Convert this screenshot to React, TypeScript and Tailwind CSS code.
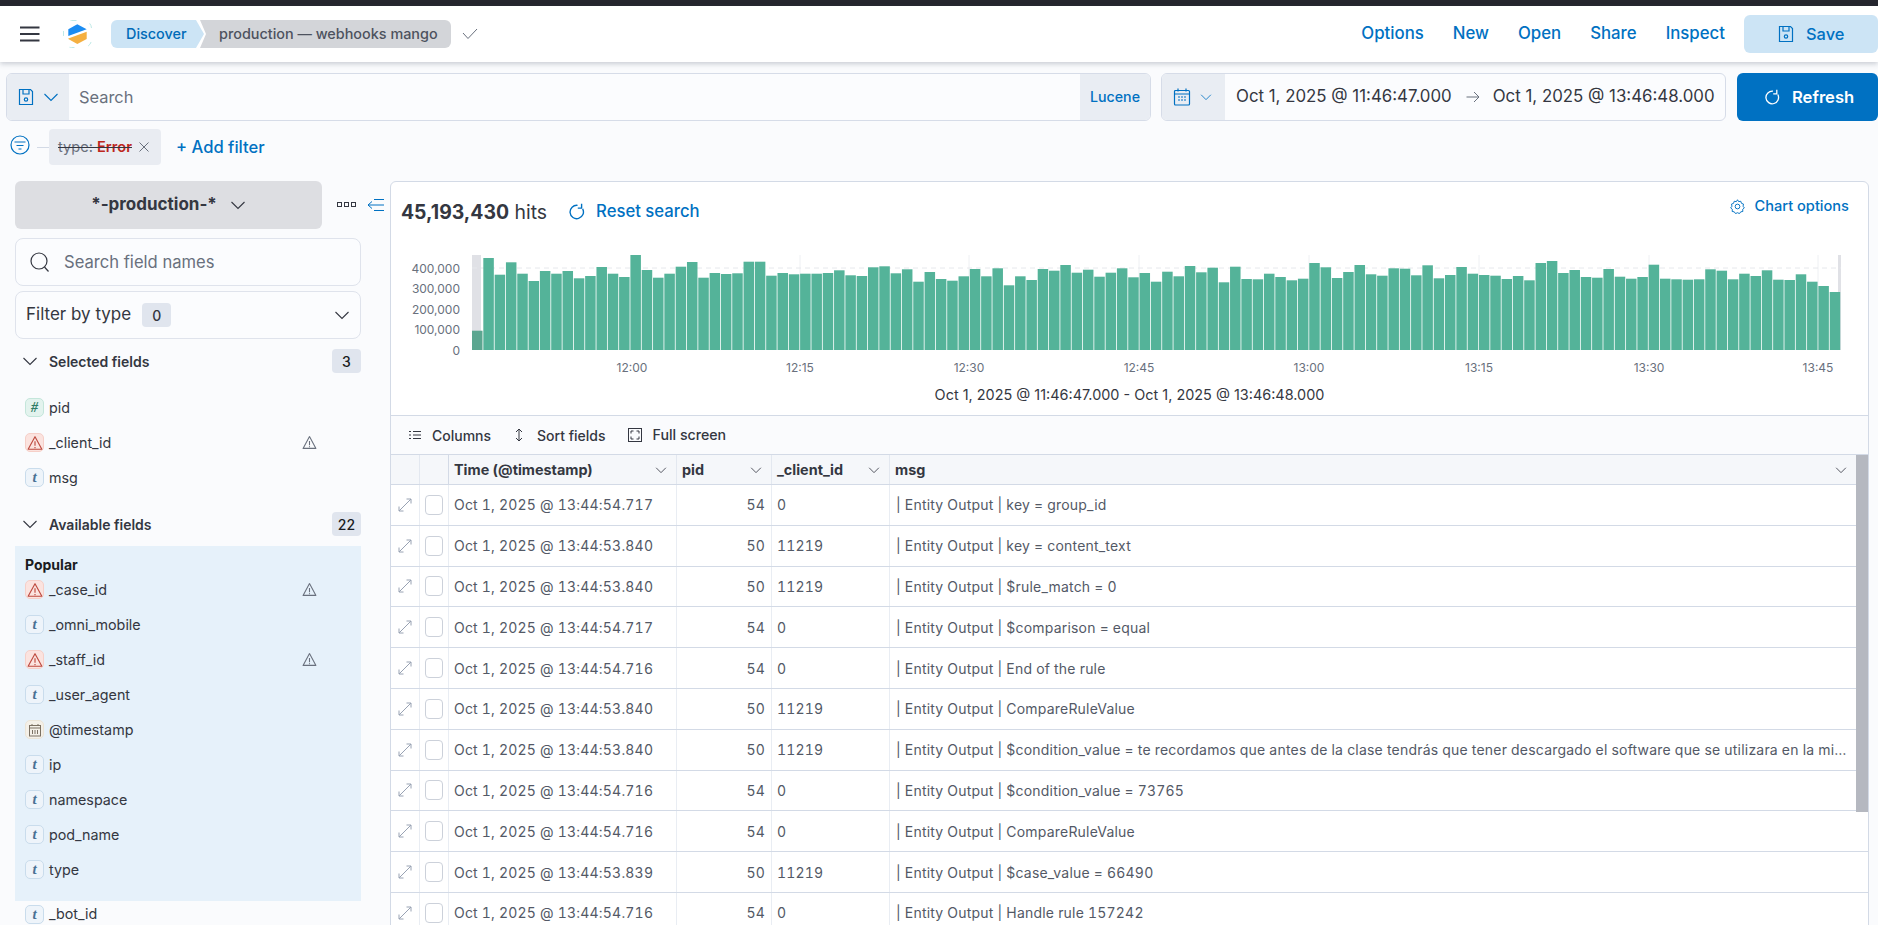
import { ReactNode } from "react";

const BLUE = "#0071c2";

// Bar heights in px, read off the histogram
const bars = [
  19.3, 92, 75.3, 87.7, 76.3, 69, 79, 76.3, 79, 71.7, 74, 83, 76.3, 73, 95, 80, 72.3, 76.3, 83.3, 88, 72.3, 77, 76,
  76.7, 88.3, 88.3, 74.3, 77, 75.7, 76.3, 76.3, 77, 79.7, 74.7, 74, 82.7, 83.7, 76.7, 80.7, 68.3, 78, 71, 69.3, 73.7,
  81, 73.7, 81.7, 64.7, 73.7, 70, 81, 79.3, 85, 77.3, 80.3, 73.3, 77.3, 81.7, 72.7, 77, 68.3, 78.3, 73.7, 84, 77.7,
  82.3, 67.7, 83.3, 71, 70.7, 76.3, 73, 69.7, 71.3, 87, 82.7, 72, 78, 85, 75.7, 74.3, 81.7, 81.3, 74.7, 84.7, 71.7,
  75, 83, 76.3, 75, 74.3, 71, 74, 69.7, 87, 89, 77, 80, 73, 72.3, 81, 73.3, 71.3, 73, 85.3, 71.3, 70.7, 70.3, 70.7,
  80.7, 79.3, 70.7, 76.3, 74, 79.7, 70.3, 70, 75.7, 68.3, 64, 58,
];

const yTicks = [
  { label: "400,000", y: 268 },
  { label: "300,000", y: 288.5 },
  { label: "200,000", y: 309 },
  { label: "100,000", y: 329.5 },
  { label: "0", y: 350 },
];

const xTicks = [
  { label: "12:00", x: 632 },
  { label: "12:15", x: 800 },
  { label: "12:30", x: 969 },
  { label: "12:45", x: 1139 },
  { label: "13:00", x: 1309 },
  { label: "13:15", x: 1479 },
  { label: "13:30", x: 1649 },
  { label: "13:45", x: 1818 },
];

const rows = [
  { time: "13:44:54.717", pid: 54, client: "0", msg: "key = group_id" },
  { time: "13:44:53.840", pid: 50, client: "11219", msg: "key = content_text" },
  { time: "13:44:53.840", pid: 50, client: "11219", msg: "$rule_match = 0" },
  { time: "13:44:54.717", pid: 54, client: "0", msg: "$comparison = equal" },
  { time: "13:44:54.716", pid: 54, client: "0", msg: "End of the rule" },
  { time: "13:44:53.840", pid: 50, client: "11219", msg: "CompareRuleValue" },
  {
    time: "13:44:53.840",
    pid: 50,
    client: "11219",
    msg: "$condition_value = te recordamos que antes de la clase tendrás que tener descargado el software que se utilizara en la misma clase",
  },
  { time: "13:44:54.716", pid: 54, client: "0", msg: "$condition_value = 73765" },
  { time: "13:44:54.716", pid: 54, client: "0", msg: "CompareRuleValue" },
  { time: "13:44:53.839", pid: 50, client: "11219", msg: "$case_value = 66490" },
  { time: "13:44:54.716", pid: 54, client: "0", msg: "Handle rule 157242" },
];

function Chevron({ size = 16, color = "#343741" }: { size?: number; color?: string }) {
  return (
    <svg width={size} height={size} viewBox="0 0 16 16" fill="none" stroke={color} strokeWidth="1.1" className="shrink-0">
      <path d="M1.5 5l6.5 6.5L14.500 5" />
    </svg>
  );
}

function SaveIcon({ size = 18, color = BLUE }: { size?: number; color?: string }) {
  return (
    <svg width={size} height={size} viewBox="0 0 18 18" fill="none" stroke={color} strokeWidth="1.200" className="shrink-0">
      <path d="M2.500 1.500h11l2 2v13h-13z" />
      <path d="M6 1.500v4.500h6v-4.500" />
      <circle cx="9" cy="11.500" r="1.700" />
    </svg>
  );
}

function RefreshIcon({ size = 16, color = BLUE }: { size?: number; color?: string }) {
  return (
    <svg width={size} height={size} viewBox="0 0 16 16" fill="none" stroke={color} strokeWidth="1.300" className="shrink-0">
      <path d="M9 2.200a6.300 6.300 0 1 0 4.800 3.300" />
      <path d="M12.800 0.800v4h-3.600" />
    </svg>
  );
}

function WarningGlyph({ color, size = 15 }: { color: string; size?: number }) {
  return (
    <svg width={size} height={size} viewBox="0 0 14 14" fill="none" stroke={color} strokeWidth="1" className="shrink-0">
      <path d="M7 1.500l6 11H1z" strokeLinejoin="round" />
      <path d="M7 5.500v4M7 10.500v1" />
    </svg>
  );
}

function FieldToken({ type }: { type: "t" | "#" | "warn" | "date" }) {
  if (type === "warn") {
    return (
      <span className="flex h-[19px] w-[19px] shrink-0 items-center justify-center rounded-[5px] border border-[#f6cfc8] bg-[#fbe3df]">
        <WarningGlyph color="#bd4a3f" size={16} />
      </span>
    );
  }
  if (type === "date") {
    return (
      <span className="flex h-[19px] w-[19px] shrink-0 items-center justify-center rounded-[5px] border border-[#ebe4d6] bg-[#f4f0e8]">
        <svg width="14" height="14" viewBox="0 0 14 14" fill="none" stroke="#7b7163" strokeWidth="1">
          <rect x="1.500" y="2.500" width="11" height="10.500" />
          <path d="M1.500 5h11M4 1v2M10 1v2M4.500 7v4M7 7v4M9.500 7v4" />
        </svg>
      </span>
    );
  }
  if (type === "#") {
    return (
      <span className="flex h-[19px] w-[19px] shrink-0 items-center justify-center rounded-[5px] border border-[#c4e6db] bg-[#e3f3ee] font-['Liberation_Serif',serif] text-[14px] font-bold italic leading-none text-[#2f7d66]">
        #
      </span>
    );
  }
  return (
    <span className="flex h-[19px] w-[19px] shrink-0 items-center justify-center rounded-[5px] border border-[#c9dcec] bg-[#eef4fa] font-['Liberation_Serif',serif] text-[15px] font-bold italic leading-none text-[#4a7194]">
      t
    </span>
  );
}

function FieldRow({ type, name, warn, short }: { type: "t" | "#" | "warn" | "date"; name: string; warn?: boolean; short?: boolean }) {
  return (
    <div className={`flex items-center gap-[5px] pl-[10px] ${short ? "h-[26px]" : "h-[35px]"}`}>
      <FieldToken type={type} />
      <span className="flex-1 text-[14.3px] text-[#343741]">{name}</span>
      {warn && (
        <span className="mr-[44px]">
          <WarningGlyph color="#69707d" />
        </span>
      )}
    </div>
  );
}

function SectionHead({ label, count, className }: { label: string; count: number; className: string }) {
  return (
    <div className={`flex h-[24px] items-center pl-[7px] ${className}`}>
      <Chevron />
      <span className="ml-[11px] flex-1 text-[14px] font-semibold text-[#343741]">{label}</span>
      <span className="flex h-[24px] w-[29px] items-center justify-center rounded-[4px] bg-[#e0e5ee] text-[14px] font-medium text-[#1a1c21]">
        {count}
      </span>
    </div>
  );
}

function NavLink({ children }: { children: ReactNode }) {
  return <span className="text-[16.8px] font-medium text-[#0071c2]">{children}</span>;
}

function Histogram() {
  const x0 = 472;
  const pitch = 11.314;
  return (
    <svg width="1477" height="130" viewBox="391 250 1477 130" className="block font-['Inter',sans-serif]">
      <rect x="472" y="255" width="9" height="95" fill="#e0e1e6" />
      <rect x="1838" y="255" width="3" height="95" fill="#e0e1e6" />
      {xTicks.map((t) => (
        <line key={t.x} x1={t.x} x2={t.x} y1="255" y2="350" stroke="#eef0f3" />
      ))}
      {yTicks.slice(0, 1).map((t) => (
        <line key={t.y} x1="472" x2="1841" y1={t.y} y2={t.y} stroke="#e6e8ec" strokeDasharray="5 4" />
      ))}
      {bars.map((h, i) => (
        <rect key={i} x={x0 + i * pitch} y={350 - h} width={pitch - 0.8} height={h} fill={i === 0 ? "#5ba690" : "#54b399"} />
      ))}
      {yTicks.map((t) => (
        <text key={t.label} x="460" y={t.y + 4.500} textAnchor="end" fontSize="12" fill="#69707d">
          {t.label}
        </text>
      ))}
      {xTicks.map((t) => (
        <text key={t.label} x={t.x} y="372" textAnchor="middle" fontSize="12" fill="#69707d">
          {t.label}
        </text>
      ))}
    </svg>
  );
}

function HeaderCell({ label, className }: { label: string; className: string }) {
  return (
    <div className={`flex items-center justify-between border-r border-[#e3e8f0] pl-[5px] pr-[9px] ${className}`}>
      <span className="text-[14.4px] font-bold text-[#343741]">{label}</span>
      <Chevron size={12} />
    </div>
  );
}

export default function App() {
  return (
    <div className="h-[925px] w-[1878px] overflow-hidden bg-[#fafbfd] font-['Inter',sans-serif] text-[#343741]">
      <div className="h-[6px] bg-[#25262e]" />

      {/* App header */}
      <div className="relative z-10 flex h-[56px] items-center justify-between bg-white shadow-[0_2px_5px_rgba(60,70,90,0.25)]">
        <div className="flex items-center">
          <svg width="20" height="16" viewBox="0 0 20 16" stroke="#343741" strokeWidth="2" className="ml-[20px]">
            <path d="M0 1.500h19.500M0 8h19.500M0 14.500h19.500" />
          </svg>
          <svg width="29" height="28" viewBox="0 0 29 28" className="ml-[23px]">
            <rect x="0.500" y="0.500" width="28" height="27" rx="8" fill="none" stroke="#bfe9e6" strokeDasharray="5 14" />
            <polygon points="14.300,4.300 23.700,9.300 5.300,16 5.300,9.300" fill="#1b8cf2" />
            <polygon points="23.700,11.700 23.700,19 14.300,24 5.300,19 5.300,18.500" fill="#f5b041" />
          </svg>
          <div className="ml-[19px] flex items-center text-[14.4px] font-medium">
            <span className="flex h-[28px] w-[93px] items-center rounded-l-[6px] bg-[#cce4f5] pl-[15px] text-[#006bb8] [clip-path:polygon(0_0,calc(100%-8px)_0,100%_50%,calc(100%-8px)_100%,0_100%)]">
              Discover
            </span>
            <span className="-ml-[4px] flex h-[28px] w-[251px] items-center rounded-r-[6px] bg-[#d3d5d9] pl-[19px] text-[#4d525e] [clip-path:polygon(0_0,100%_0,100%_100%,0_100%,6px_50%)]">
              production — webhooks mango
            </span>
          </div>
          <svg width="16" height="16" viewBox="0 0 16 16" fill="none" stroke="#69707d" className="ml-[11px]">
            <path d="M1 7l5 5.500L15 3" />
          </svg>
        </div>
        <div className="flex items-center">
          <div className="flex gap-[29px]">
            <NavLink>Options</NavLink>
            <NavLink>New</NavLink>
            <NavLink>Open</NavLink>
            <NavLink>Share</NavLink>
            <NavLink>Inspect</NavLink>
          </div>
          <div className="ml-[19px] flex h-[38px] w-[134px] items-center rounded-[6px] bg-[#cce4f5] pl-[33px]">
            <SaveIcon />
            <span className="ml-[11px] text-[16.4px] font-medium text-[#0071c2]">Save</span>
          </div>
        </div>
      </div>

      {/* Query bar */}
      <div className="mt-[11px] flex h-[48px] pl-[6px]">
        <div className="flex w-[1145px] overflow-hidden rounded-[6px] border border-[#d6dce8] bg-[#fbfcfe]">
          <div className="flex w-[62px] items-center gap-[8px] bg-[#e9edf3] pl-[10px]">
            <SaveIcon size={18} />
            <Chevron color={BLUE} />
          </div>
          <span className="flex flex-1 items-center pl-[10px] text-[16.4px] text-[#69707d]">Search</span>
          <span className="flex w-[70px] items-center justify-center bg-[#e9edf3] text-[14.2px] font-medium text-[#0071c2]">
            Lucene
          </span>
        </div>
        <div className="ml-[10px] flex w-[565px] overflow-hidden rounded-[6px] border border-[#d6dce8] bg-[#fbfcfe]">
          <div className="flex w-[63px] items-center bg-[#e9edf3] pl-[11px]">
            <svg width="18" height="18" viewBox="0 0 18 18" fill="none" stroke={BLUE} strokeWidth="1.200">
              <rect x="1.500" y="2.500" width="15" height="14.500" rx="1" />
              <path d="M1.500 6h15M5 0.500v3M13 0.500v3M5 9h2M8 9h2M11 9h2M5 12h2M8 12h2M11 12h2" />
            </svg>
            <span className="ml-[9px]">
              <Chevron size={12} color={BLUE} />
            </span>
          </div>
          <div className="flex flex-1 items-center pl-[11px] text-[16.85px] text-[#343741]">
            <span>Oct 1, 2025 @ 11:46:47.000</span>
            <svg width="14" height="12" viewBox="0 0 14 12" fill="none" stroke="#69707d" className="ml-[14px]">
              <path d="M0.500 6h12M8 1l5 5-5 5" />
            </svg>
            <span className="ml-[13px]">Oct 1, 2025 @ 13:46:48.000</span>
          </div>
        </div>
        <div className="ml-[11px] flex w-[141px] items-center rounded-[6px] bg-[#0071c2] pl-[27px] text-white">
          <RefreshIcon color="#ffffff" />
          <span className="ml-[12px] text-[16.6px] font-semibold">Refresh</span>
        </div>
      </div>

      {/* Filter row */}
      <div className="mt-[8px] flex h-[36px] items-center pl-[10px]">
        <svg width="20" height="20" viewBox="0 0 20 20" fill="none" stroke={BLUE} strokeWidth="1.200" className="-mt-[4px]">
          <circle cx="10" cy="10" r="9" />
          <path d="M4.500 7h11M6.500 10.500h7M8.500 14h3" />
        </svg>
        <span className="ml-[7px] h-px w-[12px] bg-[#d3dae6]" />
        <div className="flex h-[36px] w-[112px] items-center rounded-[4px] bg-[#e9ecf2] pl-[9px]">
          <span className="text-[14.6px] leading-none text-[#69707d] line-through decoration-[#343741]">
            type: <span className="font-semibold text-[#bd271e]">Error</span>
          </span>
          <svg width="10" height="10" viewBox="0 0 10 10" stroke="#69707d" className="ml-[7px]">
            <path d="M0.500 0.500l9 9M9.500 0.500l-9 9" />
          </svg>
        </div>
        <span className="ml-[15px] text-[16.6px] font-medium text-[#0071c2]">+ Add filter</span>
      </div>

      {/* Body */}
      <div className="mt-[16px] flex">
        <div className="w-[390px] shrink-0 pl-[15px]">
          <div className="flex h-[48px] items-center">
            <div className="flex h-[48px] w-[307px] items-center justify-center gap-[13px] rounded-[6px] bg-[#dddee2]">
              <span className="text-[17px] font-bold text-[#343741]">*-production-*</span>
              <Chevron />
            </div>
            <svg width="20" height="6" viewBox="0 0 20 6" fill="none" stroke="#343741" className="ml-[15px]">
              <rect x="0.500" y="0.500" width="4" height="4" />
              <rect x="7.500" y="0.500" width="4" height="4" />
              <rect x="14.500" y="0.500" width="4" height="4" />
            </svg>
            <svg width="18" height="14" viewBox="0 0 18 14" fill="none" stroke={BLUE} className="ml-[10px]">
              <path d="M5 3.500L1 7l4 3.500M1 7h16M7 1.500h10M7 12.500h10" />
            </svg>
          </div>

          <div className="w-[346px]">
            <div className="mt-[9px] flex h-[48px] items-center rounded-[8px] border border-[#dfe3ec] bg-[#fbfcfe] pl-[14px]">
              <svg width="20" height="20" viewBox="0 0 20 20" fill="none" stroke="#343741" strokeWidth="1.200">
                <circle cx="9" cy="9" r="8" />
                <path d="M14.500 15l4 4.500" />
              </svg>
              <span className="ml-[14px] text-[16.6px] text-[#69707d]">Search field names</span>
            </div>
            <div className="mt-[5px] flex h-[48px] items-center justify-between rounded-[8px] border border-[#dfe3ec] bg-[#fbfcfe] pl-[10px] pr-[10px]">
              <div className="flex items-center gap-[11px]">
                <span className="text-[17px] text-[#343741]">Filter by type</span>
                <span className="flex h-[24px] w-[29px] items-center justify-center rounded-[4px] bg-[#e0e5ee] text-[14px] font-medium">
                  0
                </span>
              </div>
              <Chevron />
            </div>

            <SectionHead label="Selected fields" count={3} className="mt-[10px]" />
            <div className="mt-[17px]">
              <FieldRow type="#" name="pid" />
              <FieldRow type="warn" name="_client_id" warn />
              <FieldRow type="t" name="msg" />
            </div>

            <SectionHead label="Available fields" count={22} className="mt-[17px]" />
            <div className="mt-[10px] bg-[#e6f1fa] pb-[14px] pt-[11px]">
              <div className="h-[15px] pl-[10px] text-[14px] font-bold leading-[15px] text-[#1a1c21]">Popular</div>
              <FieldRow type="warn" name="_case_id" warn />
              <FieldRow type="t" name="_omni_mobile" />
              <FieldRow type="warn" name="_staff_id" warn />
              <FieldRow type="t" name="_user_agent" />
              <FieldRow type="date" name="@timestamp" />
              <FieldRow type="t" name="ip" />
              <FieldRow type="t" name="namespace" />
              <FieldRow type="t" name="pod_name" />
              <FieldRow type="t" name="type" />
            </div>
            <FieldRow type="t" name="_bot_id" short />
          </div>
        </div>

        {/* Results panel */}
        <div className="h-[760px] w-[1479px] shrink-0 rounded-t-[6px] border border-[#d3dae6] bg-white">
          <div className="flex h-[68px] items-start justify-between pl-[10px] pr-[19px] pt-[17px]">
            <div className="flex items-center">
              <span className="text-[19.4px] leading-[24px]">
                <span className="font-bold">45,193,430</span> hits
              </span>
              <span className="ml-[21px]">
                <RefreshIcon size={17} />
              </span>
              <span className="ml-[11px] text-[16.7px] font-medium text-[#0071c2]">Reset search</span>
            </div>
            <div className="-mt-[3px] flex items-center">
              <svg width="15" height="15" viewBox="0 0 16 16" fill="none" stroke={BLUE}>
                <path d="M8 0.800l1.200 2 2.300-.4.700 2.200 2.200.8-.5 2.300 1.400 1.800-1.800 1.500.2 2.300-2.300.4-1.300 1.900-2.100-1-2.100 1-1.300-1.900-2.300-.4.200-2.300-1.800-1.500 1.400-1.800-.5-2.300 2.200-.8.700-2.200 2.300.4z" />
                <circle cx="8" cy="8" r="2.500" />
              </svg>
              <span className="ml-[10px] text-[14.6px] font-medium text-[#0071c2]">Chart options</span>
            </div>
          </div>

          <Histogram />
          <div className="flex h-[36px] justify-center border-b border-[#d3dae6] pt-[4px] text-[14.45px] text-[#343741]">
            Oct 1, 2025 @ 11:46:47.000 - Oct 1, 2025 @ 13:46:48.000
          </div>

          {/* Grid toolbar */}
          <div className="flex h-[39px] items-center border-b border-[#d3dae6] bg-[#fafbfd] pl-[18px] text-[14px] font-medium">
            <svg width="12" height="12" viewBox="0 0 12 12" stroke="#343741">
              <path d="M0 2.500h2M4 2.500h8M0 6h2M4 6h8M0 9.500h2M4 9.500h8" />
            </svg>
            <span className="ml-[11px]">Columns</span>
            <svg width="12" height="14" viewBox="0 0 12 14" fill="none" stroke="#343741" className="ml-[22px]">
              <path d="M6 1v12M3 4l3-3 3 3M3 10l3 3 3-3" />
            </svg>
            <span className="ml-[12px]">Sort fields</span>
            <svg width="14" height="14" viewBox="0 0 14 14" fill="none" stroke="#343741" className="ml-[22px]">
              <rect x="0.500" y="0.500" width="13" height="13" />
              <path d="M3 5.500V3h2.500M8.500 3H11v2.500M11 8.500V11H8.500M5.500 11H3V8.500" />
            </svg>
            <span className="ml-[11px] text-[14.2px]">Full screen</span>
          </div>

          <div className="relative">
            {/* Scrollbar thumb lying over the grid edge */}
            <div className="absolute right-0 top-0 h-[357px] w-[12px] bg-[#b5b8c0]" />
            <div className="flex h-[30px] border-b border-[#d3dae6] bg-[#f5f7fa] pr-[12px]">
              <div className="w-[29px] border-r border-[#e3e8f0]" />
              <div className="w-[29px] border-r border-[#d3dae6]" />
              <HeaderCell label="Time (@timestamp)" className="w-[228px]" />
              <HeaderCell label="pid" className="w-[95px]" />
              <HeaderCell label="_client_id" className="w-[118px]" />
              <HeaderCell label="msg" className="flex-1 border-r-0" />
            </div>
            {rows.map((r, i) => (
              <div key={i} className="box-border flex h-[40.8px] items-center border-b border-[#d3dae6] pr-[12px] text-[14px] tracking-[0.2px] text-[#535966] tabular-nums">
                <div className="flex h-full w-[29px] items-center justify-center border-r border-[#e9edf3]">
                  <svg width="14" height="14" viewBox="0 0 14 14" fill="none" stroke="#98a2b3">
                    <path d="M1 13L13 1M8.500 1H13v4.500M1 8.500V13h4.500" />
                  </svg>
                </div>
                <div className="flex h-full w-[29px] items-center justify-center border-r border-[#e9edf3]">
                  <span className="h-[20px] w-[18px] rounded-[4px] border border-[#ccd1da] bg-white" />
                </div>
                <div className="flex h-full w-[228px] items-center border-r border-[#e9edf3] pl-[5px]">Oct 1, 2025 @ {r.time}</div>
                <div className="flex h-full w-[95px] items-center justify-end border-r border-[#e9edf3] pr-[6px]">{r.pid}</div>
                <div className="flex h-full w-[118px] items-center border-r border-[#e9edf3] pl-[5px]">{r.client}</div>
                <div className="min-w-0 flex-1 truncate pl-[6px] pr-[7px]">| Entity Output | {r.msg}</div>
              </div>
            ))}
          </div>
        </div>
      </div>
    </div>
  );
}
